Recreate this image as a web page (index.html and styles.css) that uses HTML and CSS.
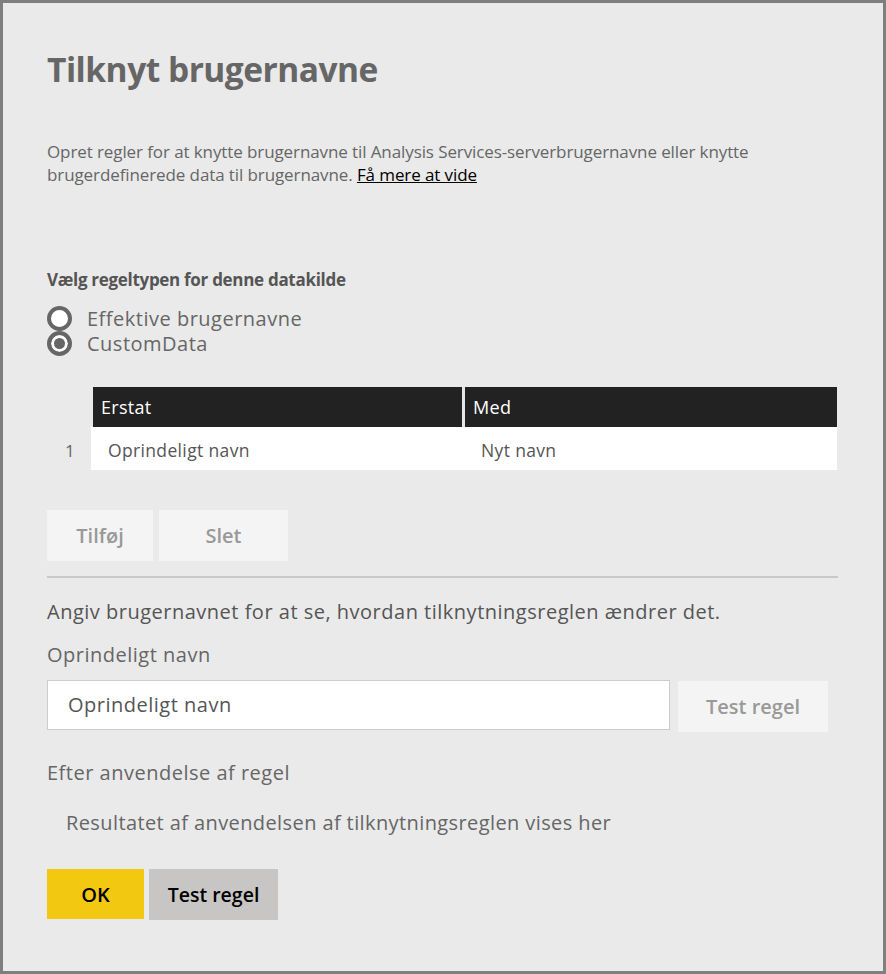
FILE: index.html
```html
<!DOCTYPE html>
<html lang="da">
<head>
<meta charset="utf-8">
<title>Tilknyt brugernavne</title>
<link rel="stylesheet" href="styles.css">
</head>
<body>
<div class="dialog">
  <h1 class="title">Tilknyt brugernavne</h1>
  <p class="desc">Opret regler for at knytte brugernavne til Analysis Services-serverbrugernavne eller knytte<br>brugerdefinerede data til brugernavne. <a class="link" href="#">Få mere at vide</a></p>

  <div class="section-label">Vælg regeltypen for denne datakilde</div>
  <div class="radios">
    <label class="radio"><span class="dot"></span><span>Effektive brugernavne</span></label>
    <label class="radio"><span class="dot checked"></span><span>CustomData</span></label>
  </div>

  <div class="table">
    <div class="row head">
      <div class="num"></div>
      <div class="cell c1">Erstat</div>
      <div class="cell c2">Med</div>
    </div>
    <div class="row body">
      <div class="num">1</div>
      <div class="cell c1">Oprindeligt navn</div>
      <div class="cell c2">Nyt navn</div>
    </div>
  </div>

  <div class="btn-row">
    <button class="btn disabled add">Tilføj</button>
    <button class="btn disabled del">Slet</button>
  </div>

  <hr class="divider">

  <p class="text intro">Angiv brugernavnet for at se, hvordan tilknytningsreglen ændrer det.</p>
  <p class="text field-label">Oprindeligt navn</p>
  <div class="input-row">
    <div class="input">Oprindeligt navn</div>
    <button class="btn disabled test">Test regel</button>
  </div>
  <p class="text after">Efter anvendelse af regel</p>
  <p class="text result">Resultatet af anvendelsen af tilknytningsreglen vises her</p>

  <div class="footer">
    <button class="btn ok">OK</button>
    <button class="btn secondary">Test regel</button>
  </div>
</div>
</body>
</html>
```
FILE: styles.css
```css
* { box-sizing: border-box; }
html, body { margin: 0; padding: 0; }
body {
  width: 886px;
  height: 974px;
  font-family: "Open Sans", "Noto Sans", sans-serif;
}
.dialog {
  width: 886px;
  height: 974px;
  background: #eaeaea;
  border: 3px solid #7f7f7f;
  padding: 0 44px;
  overflow: hidden;
}
.title {
  margin: 44px 0 0;
  font-size: 33.5px;
  line-height: 44px;
  font-weight: 700;
  color: #666;
  letter-spacing: -0.5px;
}
.desc {
  margin: 49px 0 0;
  font-size: 17px;
  line-height: 23px;
  color: #666;
  letter-spacing: -0.1px;
  white-space: nowrap;
}
.link { color: #000; text-decoration: underline; }
.section-label {
  margin-top: 83px;
  font-size: 17px;
  line-height: 22px;
  font-weight: 700;
  color: #555;
  letter-spacing: -0.3px;
}
.radios { margin-top: 15px; }
.radio {
  display: flex;
  align-items: center;
  gap: 15px;
  height: 25px;
  font-size: 20px;
  letter-spacing: 0.5px;
  line-height: 25px;
  color: #666;
}
.dot {
  width: 25px;
  height: 25px;
  border-radius: 50%;
  border: 4px solid #666;
  background: #fff;
  flex: none;
}
.dot.checked {
  background: #666;
  box-shadow: inset 0 0 0 3px #fff;
}
.table { margin-top: 31px; }
.row { display: flex; }
.num {
  width: 44px;
  flex: none;
  color: #666;
  font-size: 17px;
  padding-left: 18px;
}
.row.head { height: 40px; }
.row.head .cell {
  background: #222;
  color: #fff;
  font-size: 18px;
  letter-spacing: 0.3px;
  line-height: 40px;
  padding-left: 8px;
  flex: none;
}
.row.head .c1 { width: 369px; margin-left: 2px; }
.row.head .c2 { width: 375px; border-left: 3px solid #e6e6e6; padding-left: 8px; }
.row.body { height: 43px; }
.row.body .num { padding-top: 4px; line-height: 39px; }
.row.body .cell {
  background: #fff;
  color: #555;
  font-size: 17.5px;
  letter-spacing: 0.35px;
  height: 43px;
  padding-top: 4px;
  line-height: 39px;
  flex: none;
}
.row.body .c1 { width: 374px; padding-left: 17px; }
.row.body .c2 { width: 372px; padding-left: 16px; }
.btn-row { margin-top: 40px; display: flex; gap: 6px; }
.btn {
  font-family: inherit;
  border: none;
  font-size: 20px;
  font-weight: 600;
  height: 51px;
  padding: 0;
  cursor: default;
}
.btn.disabled { background: #f4f4f4; color: #999; }
.btn.add { width: 106px; }
.btn.del { width: 129px; }
.divider {
  margin: 15px 0 0;
  border: none;
  border-top: 2px solid #c8c8c8;
  width: 791px;
  height: 0;
}
.text {
  margin: 0;
  font-size: 20px;
  letter-spacing: 0.5px;
  color: #555;
  line-height: 26px;
}
.intro { margin-top: 21px; }
.field-label { margin-top: 17px; color: #666; }
.input-row { margin-top: 12px; display: flex; gap: 8px; align-items: flex-start; }
.input {
  width: 623px;
  height: 50px;
  background: #fff;
  border: 1px solid #ccc;
  font-size: 20px;
  letter-spacing: 0.5px;
  color: #555;
  line-height: 48px;
  padding-left: 20px;
}
.btn.test { width: 150px; margin-top: 1px; }
.after { margin-top: 28px; color: #666; }
.result { margin-top: 24px; padding-left: 19px; color: #666; letter-spacing: 0.4px; }
.footer { margin-top: 33px; display: flex; gap: 5px; }
.btn.ok { width: 97px; height: 50px; background: #f2c811; color: #000; }
.btn.secondary { width: 129px; height: 51px; background: #c8c6c4; color: #000; font-size: 19.5px; }
```
